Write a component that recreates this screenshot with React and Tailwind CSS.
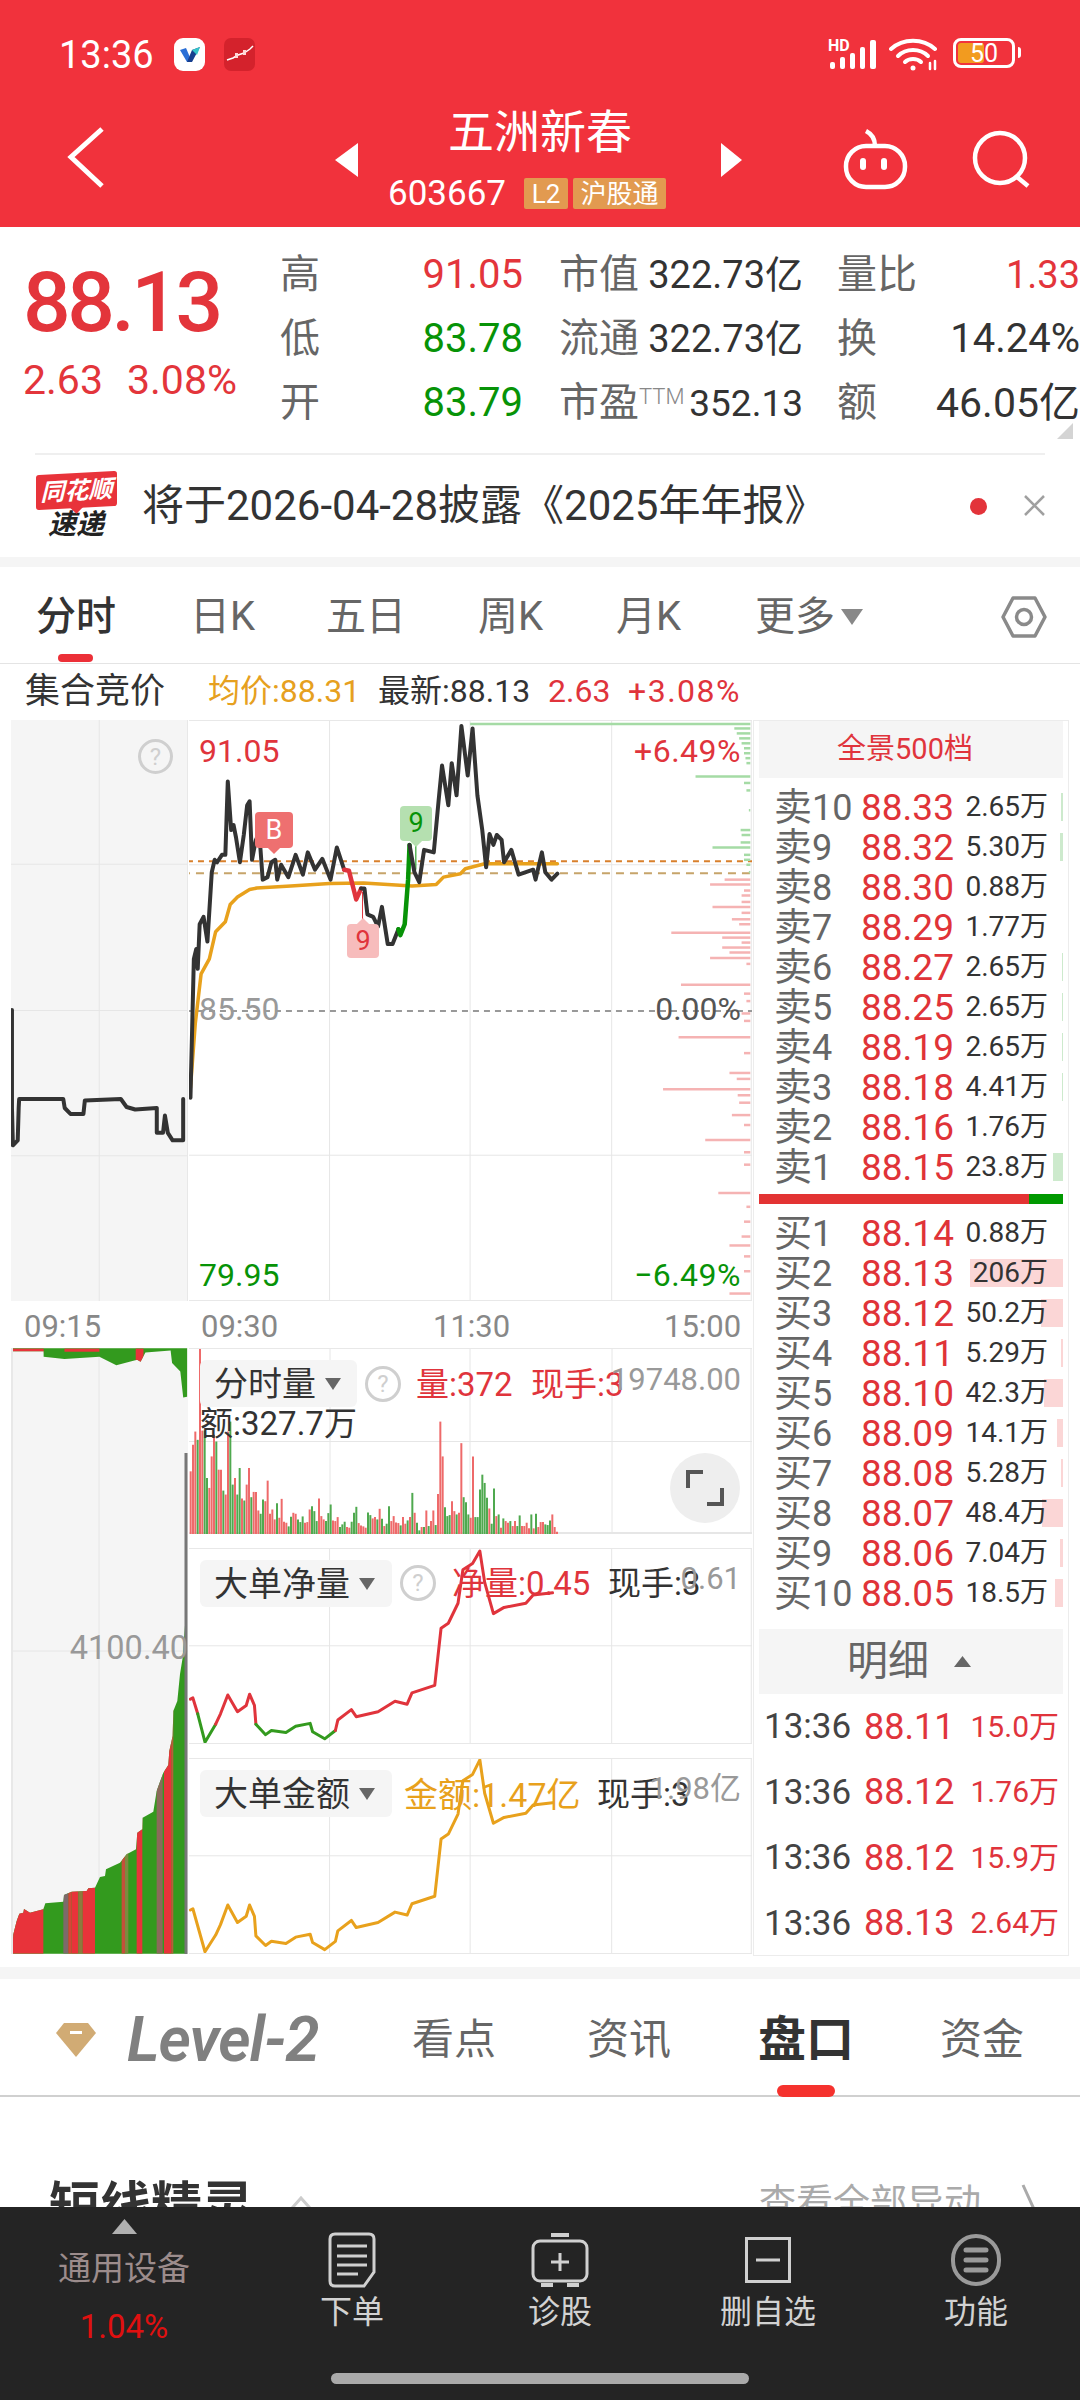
import React from "react";

const sells = [
  ["10", "88.33", "2.65万", 2], ["9", "88.32", "5.30万", 3], ["8", "88.30", "0.88万", 0], ["7", "88.29", "1.77万", 0], ["6", "88.27", "2.65万", 1],
  ["5", "88.25", "2.65万", 1], ["4", "88.19", "2.65万", 1], ["3", "88.18", "4.41万", 1], ["2", "88.16", "1.76万", 0], ["1", "88.15", "23.8万", 10],
];
const buys = [
  ["1", "88.14", "0.88万", 0], ["2", "88.13", "206万", 93], ["3", "88.12", "50.2万", 22], ["4", "88.11", "5.29万", 2], ["5", "88.10", "42.3万", 19],
  ["6", "88.09", "14.1万", 6], ["7", "88.08", "5.28万", 2], ["8", "88.07", "48.4万", 21], ["9", "88.06", "7.04万", 3], ["10", "88.05", "18.5万", 8],
];
const ticks = [["88.11", "15.0万"], ["88.12", "1.76万"], ["88.12", "15.9万"], ["88.13", "2.64万"]];

// chart points are in the coordinates of the zoomed reference
const preLine = "23,903 23,1100 25,1175 35,1165 37,1100 38,1082 130,1082 133,1100 145,1112 172,1112 175,1085 250,1082 262,1098 280,1103 325,1100 325,1150 338,1150 342,1115 348,1150 358,1165 380,1165 380,1082";
const priceA = "393,1080 400,800 405,780 408,820 412,730 420,715 428,765 437,625 443,600 448,605 458,590 465,590 470,442 477,540 482,530 487,555 495,605 503,550 510,490 515,482 520,600 528,560 535,545 542,640 552,635 560,605 568,600 572,640 580,610 595,635 610,590 625,630 635,585 650,620 665,598 682,640 695,575 710,620";
const priceRed = "710,620 720,622 735,680 745,658";
const priceB = "745,658 752,658 758,710 770,715 780,735 788,695 800,770 810,770 822,740";
const priceGreen = "822,740 826,752 835,730 842,640 845,570";
const priceC = "845,570 855,625 865,645 875,580 895,585 905,480 912,410 925,490 932,405 942,470 952,330 965,430 975,335 985,470 995,540 1003,615 1010,548 1018,570 1025,550 1035,560 1040,605 1055,580 1070,630 1100,620 1105,640 1118,585 1125,625 1138,640 1150,628";
const avgLine = "393,1060 403,930 415,830 432,800 445,745 465,725 475,690 490,675 515,660 530,657 600,653 680,648 750,647 800,650 850,653 900,650 915,635 950,628 960,618 1000,608 1150,608";

const depthGreen = [[326, 970], [335, 1515], [345, 1520], [355, 1525], [365, 1530], [375, 1535], [385, 1535], [395, 1538], [405, 1540], [432, 1435], [445, 1535], [460, 1540], [500, 1545], [540, 1528], [550, 1530], [565, 1528], [575, 1470], [590, 1535], [600, 1535], [610, 1540], [625, 1545]];
const depthRed = [[640, 1495], [650, 1465], [662, 1535], [672, 1530], [685, 1530], [695, 1470], [707, 1530], [720, 1510], [730, 1525], [747, 1385], [757, 1490], [767, 1530], [777, 1490], [787, 1505], [798, 1465], [810, 1540], [852, 1405], [870, 1535], [885, 1540], [910, 1530], [925, 1535], [958, 1400], [990, 1535], [1030, 1505], [1042, 1520], [1063, 1368], [1075, 1522], [1090, 1525], [1115, 1510], [1135, 1535], [1165, 1455], [1190, 1535], [1215, 1535], [1272, 1482], [1300, 1540], [1330, 1535], [1360, 1530], [1378, 1505], [1400, 1535], [1430, 1535], [1475, 1505]];

// one bar every 7 zoom units from x=32, r/g + top
const volTops = ("r150 r70 r30 g55 r-219 r27 g27 g170 r200 r105 r40 g60 r145 r145 g208 r220 r30 g0 g190 r170 g220 g140 r232 g238 r190 r140 g228 r212 r212 r268 g278 g235 r240 r178 r278 r265 r295 g246 r290 r233 r302 r305 g316 g287 r275 r278 g295 g303 g286 r305 r303 r265 g255 g270 g300 r232 r285 r295 g300 g276 g250 r298 r300 r288 g318 g310 g302 r318 r320 g302 g275 g257 r306 r313 r316 r320 g274 g282 r292 r288 g295 r263 g293 r315 g308 g255 r300 r285 r304 r306 g313 r288 r308 g298 r288 g215 r275 g305 g328 r318 g318 r268 g315 r300 r268 g312 r218 r0 r105 g258 g285 g282 r240 r270 g280 r275 r65 g228 g243 g280 r290 r105 g288 g288 g205 g160 g185 g230 r262 g308 g202 r285 g280 r320 g292 r300 r305 g300 r315 r300 g315 g283 r315 r315 r305 r322 g280 r322 g278 r318 r303 r303 g310 g312 g298 r280 r318 r332").split(" ");

const netRed1 = "393,900 398,897 408,935";
const netGreen1 = "408,935 423,1003 445,960";
const netRed2 = "445,960 455,935 470,890 490,930 508,915 515,888 525,915 528,960";
const netGreen2 = "528,960 548,985 560,975 590,980 610,965 640,958 645,978 670,995 692,975";
const netRed3 = "692,975 697,950 725,925 735,942 780,930 815,905 840,912 850,885 897,867 910,730 925,718 945,670 955,590 975,575 990,545 1000,620 1018,695 1040,680 1085,670 1100,650 1140,645";
const goldLine = "393,1400 398,1397 423,1500 445,1460 455,1435 470,1388 490,1430 508,1415 515,1388 525,1415 528,1462 548,1485 560,1475 590,1480 610,1465 640,1458 645,1478 670,1495 692,1475 697,1450 725,1425 735,1442 780,1430 815,1405 840,1412 850,1385 897,1367 910,1230 925,1218 945,1170 955,1090 975,1075 990,1040 1000,1120 1018,1192 1040,1178 1085,1168 1100,1148 1140,1143";
const leftTop = "25,65 386,65 386,180 378,182 372,120 355,100 352,70 300,75 290,97 283,92 240,105 205,85 133,90 90,85 90,72 25,72";
const leftArea = "36,938 40,880 50,840 58,818 70,815 72,804 90,815 130,805 136,787 190,782 192,762 215,752 260,750 265,742 285,740 300,708 315,705 318,685 360,665 380,640 408,625 412,575 427,565 428,530 460,512 470,450 490,395 505,372 508,330 518,285 520,210 532,180 540,100 548,50 556,-60 560,-76 560,938";
const leftStripes = [[36, 94, "#e8333a"], [190, 15, "#7d6a6a"], [205, 10, "#d84438"], [215, 20, "#e8333a"], [235, 13, "#8d7a3e"], [248, 37, "#e8333a"], [365, 10, "#c5503a"], [375, 10, "#7d8a40"], [410, 17, "#e8333a"], [470, 18, "#8a6a5a"], [492, 23, "#e8333a"], [515, 5, "#b5603a"], [556, 4, "#7d6a6a"]];

function Line({ points, color, width = 3, dash }) {
  return <polyline points={points} fill="none" stroke={color} strokeWidth={width} strokeDasharray={dash} strokeLinejoin="round" strokeLinecap="round" vectorEffect="non-scaling-stroke" />;
}

function HLine({ y, x1 = 0, x2 = 2000, color = "#e6e6e6", width = 1, dash }) {
  return <line x1={x1} x2={x2} y1={y} y2={y} stroke={color} strokeWidth={width} strokeDasharray={dash} vectorEffect="non-scaling-stroke" />;
}

function VLine({ x, y1 = 0, y2 = 2000, color = "#e6e6e6", width = 1 }) {
  return <line x1={x} x2={x} y1={y1} y2={y2} stroke={color} strokeWidth={width} vectorEffect="non-scaling-stroke" />;
}

function Help({ className }) {
  return (
    <div className={"absolute flex items-center justify-center rounded-full border-[3px] border-[#cfcfcf] text-[#cfcfcf] text-[24px] leading-none " + className}>?</div>
  );
}

function Dropdown({ label, className }) {
  return (
    <div className={"absolute left-[11px] top-[11px] h-[47px] flex items-center gap-[9px] pl-[14px] rounded-md bg-[#f5f5f5] text-[34px] leading-none text-[#333] " + className}>
      {label}
      <svg width="16" height="12" viewBox="0 0 16 12"><polygon points="0,0 16,0 8,12" fill="#666" /></svg>
    </div>
  );
}

function Tag({ children, className }) {
  return <div className={"h-[31px] flex items-center justify-center rounded-[2px] bg-[#e29a50] text-white text-[26px] leading-none " + className}>{children}</div>;
}

function StatRow({ label, value, valueClass = "text-[#333]" }) {
  return (
    <div className="h-[64px] flex items-center justify-between">
      <span className="text-[40px] leading-none text-[#666]">{label}</span>
      <span className={"leading-none " + valueClass}>{value}</span>
    </div>
  );
}

function Depth({ side, row, barColor }) {
  const [lvl, price, amount, bar] = row;
  return (
    <div className="relative h-[40px] flex items-center">
      {bar > 0 && <div className={"absolute right-0 top-[6px] h-[28px] " + barColor} style={{ width: bar }} />}
      <span className="relative w-[102px] pl-[15px] leading-none text-[#666] whitespace-nowrap">
        <span className="text-[38px]">{side}</span>
        <span className="text-[36px]">{lvl}</span>
      </span>
      <span className="relative text-[37px] leading-none text-[#e03338]">{price}</span>
      <span className="relative ml-auto mr-[15px] text-[28px] leading-none text-[#333]">{amount}</span>
    </div>
  );
}

function BottomItem({ label, children }) {
  return (
    <div className="w-[208px] flex flex-col items-center">
      <div className="h-[62px] flex items-center justify-center">{children}</div>
      <span className="mt-[5px] text-[32px] leading-none text-[#d2d2d2]">{label}</span>
    </div>
  );
}

export default function App() {
  return (
    <div className="relative w-[1080px] h-[2400px] overflow-hidden flex flex-col bg-white font-['Roboto','Noto_Sans_CJK_SC',sans-serif]">
      {/* header */}
      <div className="h-[227px] shrink-0 bg-[#f1323c] text-white">
        <div className="h-[105px] flex items-start pt-[38px] pl-[59px]">
          <span className="w-[115px] text-[38px] leading-[34px]">13:36</span>
          <div className="w-[31px] h-[33px] rounded-[9px] bg-white flex items-center justify-center">
            <svg width="24" height="22" viewBox="0 0 24 22">
              <path d="M2 6 L9 18 L14 18 L8 4 Z" fill="#2a6fd6" />
              <path d="M9 18 L14 18 L22 3 L14 6 Z" fill="#173f8f" />
              <path d="M14 6 L22 3 L19 11 Z" fill="#35c4c9" />
            </svg>
          </div>
          <div className="ml-[19px] w-[31px] h-[33px] rounded-[7px] bg-[#d4222c] flex items-center justify-center">
            <svg width="28" height="20" viewBox="0 0 28 20">
              <polyline points="1,15 7,13 12,10 18,8 24,4 27,1" fill="none" stroke="#fff" strokeWidth="1.5" />
              <rect x="9" y="8" width="3" height="5" fill="#ffd7d7" />
              <rect x="17" y="5" width="3" height="5" fill="#ffd7d7" />
            </svg>
          </div>
          <div className="ml-auto mr-[59px] flex items-start">
            <div className="relative w-[50px] h-[32px]">
              <span className="absolute left-0 top-0 text-[16px] leading-none font-bold">HD</span>
              <svg className="absolute left-0 top-0" width="50" height="32" viewBox="0 0 50 32">
                <rect x="2" y="24" width="5" height="7" rx="2" fill="#fff" />
                <rect x="12" y="19" width="5" height="12" rx="2" fill="#fff" />
                <rect x="22" y="15" width="5" height="16" rx="2" fill="#fff" />
                <rect x="32" y="9" width="5" height="22" rx="2" fill="#fff" />
                <rect x="42" y="2" width="6" height="29" rx="2" fill="#fff" />
              </svg>
            </div>
            <svg className="ml-[11px]" width="48" height="34" viewBox="0 0 48 34" fill="none" stroke="#fff" strokeWidth="4" strokeLinecap="round">
              <path d="M2 11 C14 0 34 0 46 11" />
              <path d="M9 18 C17 10 31 10 39 18" />
              <path d="M16 24 C20 20 28 20 32 24" />
              <circle cx="24" cy="30" r="2.5" fill="#fff" stroke="none" />
              <path d="M41 25 V31 M46 23 V31" strokeWidth="2.5" />
            </svg>
            <div className="ml-[16px] relative w-[62px] h-[30px] rounded-[8px] border-[3px] border-white flex items-center">
              <div className="absolute left-[2px] top-[2px] bottom-[2px] w-[26px] rounded-[3px] bg-[#f29b1f]" />
              <span className="relative ml-[14px] text-[25px] leading-none">50</span>
            </div>
            <div className="mt-[9px] ml-[3px] w-[3px] h-[11px] rounded-r-sm bg-white" />
          </div>
        </div>
        <div className="relative h-[122px]">
          <svg className="absolute left-0 top-0" width="1080" height="122" viewBox="0 105 1080 122">
            <polyline points="102,129 71,157 102,186" fill="none" stroke="#fff" strokeWidth="5" />
            <polygon points="358,143 358,177 335,160" fill="#fff" />
            <polygon points="721,143 721,177 742,160" fill="#fff" />
            <g fill="none" stroke="#fff" strokeWidth="4.5">
              <rect x="846" y="146" width="59" height="41" rx="20" />
              <path d="M875 146 C875 138 872 134 866 131" />
              <circle cx="1000" cy="158" r="25" />
              <path d="M1017 177 L1028 186" />
            </g>
            <rect x="860" y="158" width="6" height="12" rx="3" fill="#fff" />
            <rect x="881" y="158" width="6" height="12" rx="3" fill="#fff" />
          </svg>
          <div className="absolute left-[448px] top-[5px] text-[46px] leading-[45px] whitespace-nowrap">五洲新春</div>
          <div className="absolute left-[388px] top-[71px] flex items-center">
            <span className="w-[136px] text-[35px] leading-none">603667</span>
            <Tag className="w-[44px]">L2</Tag>
            <Tag className="ml-[5px] w-[93px]">沪股通</Tag>
          </div>
        </div>
      </div>

      {/* quote */}
      <div className="relative h-[226px] shrink-0 flex pt-[16px]">
        <div className="w-[280px] pl-[23px] pt-[20px]">
          <div className="text-[84px] leading-[80px] text-[#e3353b] font-medium tracking-[-3.5px]">88.13</div>
          <div className="mt-[17px] flex text-[41px] leading-none text-[#e3353b]">
            <span className="w-[104px]">2.63</span>
            <span>3.08%</span>
          </div>
        </div>
        <div className="w-[243px]">
          <StatRow label="高" value="91.05" valueClass="text-[40px] text-[#e3353b]" />
          <StatRow label="低" value="83.78" valueClass="text-[40px] text-[#079307]" />
          <StatRow label="开" value="83.79" valueClass="text-[40px] text-[#079307]" />
        </div>
        <div className="ml-[36px] w-[244px]">
          <StatRow label="市值" value="322.73亿" valueClass="text-[38px] text-[#333]" />
          <StatRow label="流通" value="322.73亿" valueClass="text-[38px] text-[#333]" />
          <div className="h-[64px] flex items-center">
            <span className="text-[40px] leading-none text-[#666]">市盈</span>
            <span className="self-start mt-[15px] text-[22px] leading-none font-light text-[#888]">TTM</span>
            <span className="ml-auto text-[37px] leading-none text-[#333]">352.13</span>
          </div>
        </div>
        <div className="ml-[34px] w-[243px]">
          <StatRow label="量比" value="1.33" valueClass="text-[38px] text-[#e3353b]" />
          <StatRow label="换" value="14.24%" valueClass="text-[40px] text-[#333]" />
          <StatRow label="额" value="46.05亿" valueClass="text-[41px] text-[#333]" />
        </div>
        <svg className="absolute left-[1057px] top-[196px]" width="16" height="16" viewBox="0 0 16 16"><polygon points="16,0 16,16 0,16" fill="#d4d4d4" /></svg>
      </div>

      {/* notice */}
      <div className="h-[104px] shrink-0 mx-[35px] border-t-2 border-[#efefef] flex items-center">
        <div className="w-[82px] h-[66px] flex flex-col items-center">
          <div className="relative w-[81px] h-[36px] rounded-[3px] bg-[#e8333a] skew-y-[-3deg] flex items-center justify-center text-white italic font-bold text-[24px] leading-none">
            同花顺
            <div className="absolute left-[36px] bottom-[-4px] w-[9px] h-[9px] rotate-45 bg-[#e8333a]" />
          </div>
          <div className="mt-[3px] text-[#222] italic font-bold text-[28px] leading-none">速递</div>
        </div>
        <span className="ml-[25px] text-[42px] leading-none text-[#333] whitespace-nowrap">将于2026-04-28披露《2025年年报》</span>
        <div className="ml-auto mr-[58px] w-[17px] h-[17px] rounded-full bg-[#e3333a]" />
        <svg className="absolute left-[1024px] top-[495px]" width="21" height="21" viewBox="0 0 21 21" stroke="#a0a0a0" strokeWidth="2.5"><path d="M1 1 L20 20 M20 1 L1 20" /></svg>
      </div>
      <div className="h-[10px] shrink-0 bg-[#f5f5f5]" />

      {/* period tabs */}
      <div className="relative h-[97px] shrink-0 border-b border-[#e4e4e4] flex items-center pt-[3px] text-[40px] leading-none text-[#666]">
        <span className="ml-[36px] w-[154px] font-medium text-[#333]">分时</span>
        <span className="w-[136px]">日K</span>
        <span className="w-[152px]">五日</span>
        <span className="w-[138px]">周K</span>
        <span className="w-[139px]">月K</span>
        <span>更多</span>
        <svg className="ml-[6px]" width="22" height="16" viewBox="0 0 22 16"><polygon points="0,0 22,0 11,16" fill="#888" /></svg>
        <svg className="absolute left-[1001px] top-[29px]" width="46" height="42" viewBox="0 0 46 42" fill="none" stroke="#8a8a8a" strokeWidth="3.5">
          <polygon points="12,2 34,2 44,21 34,40 12,40 2,21" strokeLinejoin="round" />
          <circle cx="23" cy="21" r="7.5" />
        </svg>
        <div className="absolute left-[58px] bottom-[1px] w-[35px] h-[8px] rounded-full bg-[#ec3038]" />
      </div>

      {/* sub header */}
      <div className="h-[54px] shrink-0 flex items-center text-[32px] leading-none whitespace-nowrap">
        <span className="ml-[25px] w-[183px] text-[35px] text-[#333]">集合竞价</span>
        <span className="w-[170px] text-[#e6a020]">均价:88.31</span>
        <span className="w-[170px] text-[#333]">最新:88.13</span>
        <span className="w-[80px] text-[#e0343c]">2.63</span>
        <span className="text-[#e0343c] tracking-[1.5px]">+3.08%</span>
      </div>

      {/* chart + order book */}
      <div className="h-[1238px] shrink-0 flex pt-[2px]">
        <div className="w-[753px] shrink-0 pl-[11px]">
          <div className="h-[581px] flex">
            <div className="relative w-[177px] bg-[#f5f5f5] border-r border-[#e8e8e8]">
              <svg className="absolute inset-0 w-full h-full" viewBox="21 320 367 1168" preserveAspectRatio="none">
                <HLine y={610} />
                <HLine y={904} />
                <HLine y={1196} />
                <VLine x={205} />
                <Line points={preLine} color="#333" width={4} />
              </svg>
              <Help className="left-[127px] top-[19px] w-[35px] h-[35px]" />
            </div>
            <div className="relative ml-[1px] w-[563px] border-y border-[#e8e8e8]">
              <svg className="absolute inset-0 w-full h-full" viewBox="390 320 1161.5 1168" preserveAspectRatio="none">
                <HLine y={610} />
                <HLine y={1196} />
                <VLine x={680} />
                <VLine x={970} />
                <VLine x={1262} />
                <VLine x={1550} />
                <HLine y={603} color="#d9802c" width={2} dash="6 5" />
                <HLine y={627} color="#c6a46a" width={2} dash="8 6" />
                <HLine y={905} color="#999" width={2} dash="6 5" />
                {depthGreen.map(([y, x]) => <HLine key={y} y={y} x1={x} x2={1548} color="#a5dba5" width={2.5} />)}
                {depthRed.map(([y, x]) => <HLine key={y} y={y} x1={x} x2={1548} color="#f5b3b3" width={2.5} />)}
                <Line points={avgLine} color="#e8a11c" width={3.5} />
                <VLine x={748} y1={665} y2={725} color="#e0343c" />
                <VLine x={858} y1={565} y2={620} color="#079307" />
                <Line points={priceA} color="#333" width={4} />
                <Line points={priceRed} color="#e0343c" width={4.5} />
                <Line points={priceB} color="#333" width={4} />
                <Line points={priceGreen} color="#079307" width={4.5} />
                <Line points={priceC} color="#333" width={4} />
              </svg>
              <span className="absolute left-[10px] top-[14px] text-[32px] leading-none text-[#e0343c]">91.05</span>
              <span className="absolute left-[10px] top-[272px] text-[32px] leading-none text-[#999]">85.50</span>
              <span className="absolute left-[10px] top-[538px] text-[32px] leading-none text-[#079307]">79.95</span>
              <span className="absolute right-[11px] top-[14px] text-[32px] leading-none text-[#e0343c] tracking-[0.5px]">+6.49%</span>
              <span className="absolute right-[11px] top-[272px] text-[32px] leading-none text-[#555]">0.00%</span>
              <span className="absolute right-[11px] top-[538px] text-[32px] leading-none text-[#079307] tracking-[0.5px]">−6.49%</span>
              <div className="absolute left-[66px] top-[91px] w-[38px] h-[36px] rounded-[4px] bg-[#ee7070] flex items-center justify-center text-white text-[27px] leading-none">
                <div className="absolute left-[14px] bottom-[-4px] w-[10px] h-[10px] rotate-45 bg-[#ee7070]" />
                <span className="relative">B</span>
              </div>
              <div className="absolute left-[158px] top-[203px] w-[32px] h-[34px] rounded-[4px] bg-[#f7bcbc] flex items-center justify-center text-[#e0343c] text-[27px] leading-none">
                <div className="absolute left-[11px] top-[-4px] w-[10px] h-[10px] rotate-45 bg-[#f7bcbc]" />
                <span className="relative">9</span>
              </div>
              <div className="absolute left-[211px] top-[85px] w-[32px] h-[35px] rounded-[4px] bg-[#b5e0b0] flex items-center justify-center text-[#079307] text-[27px] leading-none">
                <div className="absolute left-[11px] bottom-[-4px] w-[10px] h-[10px] rotate-45 bg-[#b5e0b0]" />
                <span className="relative">9</span>
              </div>
            </div>
          </div>

          <div className="h-[47px] relative text-[31px] leading-none text-[#888]">
            <span className="absolute left-[13px] top-[10px]">09:15</span>
            <span className="absolute left-[190px] top-[10px]">09:30</span>
            <span className="absolute left-[422px] top-[10px]">11:30</span>
            <span className="absolute left-[653px] top-[10px]">15:00</span>
          </div>

          <div className="h-[606px] flex">
            <div className="relative w-[177px] h-full bg-[#f5f5f5] border-l-2 border-[#e8e8e8]">
              <svg className="absolute inset-0 w-full h-full" viewBox="13 1347 175 606" preserveAspectRatio="none">
                <defs>
                  <clipPath id="leftClip"><polygon points={leftArea} /></clipPath>
                  <clipPath id="leftTopClip"><polygon points={leftTop} /></clipPath>
                </defs>
                <HLine y={1650} />
                <VLine x={99} />
                {/* upper block in the first crop's scale */}
                <g transform="translate(0 1320) scale(0.4847 0.4209)">
                  <polygon points={leftTop} fill="#339a1e" />
                  <g clipPath="url(#leftTopClip)" fill="#e8333a">
                    <rect x="25" y="65" width="65" height="10" />
                    <rect x="133" y="65" width="72" height="8" />
                    <rect x="280" y="65" width="16" height="40" />
                  </g>
                </g>
                <g transform="translate(0 1640) scale(0.3333)">
                  <polygon points={leftArea} fill="#339a1e" />
                  <g clipPath="url(#leftClip)">
                    {leftStripes.map(([x, w, c]) => <rect key={x} x={x} y="-100" width={w} height="1040" fill={c} />)}
                  </g>
                </g>
                <VLine x={186} y1={1452} y2={1953} color="#777" width={3} />
              </svg>
              <span className="absolute right-0 top-[284px] text-[32.5px] leading-none text-[#999]">4100.40</span>
            </div>
            <div className="ml-[1px] w-[563px] h-full flex flex-col">
              <div className="relative h-[186px] border-t border-[#e8e8e8]">
                <svg className="absolute inset-0 w-full h-full" viewBox="189 1347 563 186" preserveAspectRatio="none">
                  <HLine y={1440} />
                  <HLine y={1532} width={2} />
                  <VLine x={330} />
                  <VLine x={470} />
                  <VLine x={612} />
                  <VLine x={751} />
                  {volTops.map((t, i) => (
                    <VLine key={i} x={180 + (32 + i * 7) / 3} y1={1420 + Number(t.slice(1)) / 3} y2={1534} color={t[0] === "g" ? "#4fa94f" : "#ee6a6a"} width={2} />
                  ))}
                </svg>
                <Dropdown label="分时量" className="w-[157px]" />
                <Help className="left-[176px] top-[17px] w-[36px] h-[36px]" />
                <span className="absolute left-[227px] top-[19px] text-[33px] leading-none text-[#e0343c]">量:372</span>
                <span className="absolute left-[342px] top-[19px] text-[33px] leading-none text-[#e0343c]">现手:3</span>
                <span className="absolute right-[11px] top-[15px] text-[31px] leading-none text-[#999]">19748.00</span>
                <span className="absolute left-[11px] top-[58px] text-[33px] leading-none text-[#333]">额:327.7万</span>
                <div className="absolute left-[481px] top-[104px] w-[70px] h-[70px] rounded-full bg-[#eeeeee] flex items-center justify-center">
                  <svg width="38" height="38" viewBox="0 0 38 38" fill="none" stroke="#555" strokeWidth="4">
                    <path d="M2 19 V3 H17" />
                    <path d="M36 19 V35 H21" />
                  </svg>
                </div>
              </div>
              <div className="relative h-[196px] mt-[14px] border-y border-[#e8e8e8]">
                <svg className="absolute inset-0 w-full h-full" viewBox="390 540 1161.5 465" preserveAspectRatio="none">
                  <HLine y={772} />
                  <VLine x={680} />
                  <VLine x={970} />
                  <VLine x={1262} />
                  <VLine x={1550} />
                  <Line points={netRed1} color="#e0343c" />
                  <Line points={netGreen1} color="#339a1e" />
                  <Line points={netRed2} color="#e0343c" />
                  <Line points={netGreen2} color="#339a1e" />
                  <Line points={netRed3} color="#e0343c" />
                </svg>
                <Dropdown label="大单净量" className="w-[192px]" />
                <Help className="left-[211px] top-[16px] w-[36px] h-[36px]" />
                <span className="absolute left-[263px] top-[18px] text-[33px] leading-none text-[#e0343c]">净量:0.45</span>
                <span className="absolute left-[419px] top-[18px] text-[33px] leading-none text-[#333]">现手:3</span>
                <span className="absolute right-[11px] top-[14px] text-[31px] leading-none text-[#999]">0.61</span>
              </div>
              <div className="relative h-[196px] mt-[14px] border-y border-[#e8e8e8]">
                <svg className="absolute inset-0 w-full h-full" viewBox="390 1038 1161.5 465" preserveAspectRatio="none">
                  <HLine y={1270} />
                  <VLine x={680} />
                  <VLine x={970} />
                  <VLine x={1262} />
                  <VLine x={1550} />
                  <Line points={goldLine} color="#e8a11c" />
                </svg>
                <Dropdown label="大单金额" className="w-[192px]" />
                <span className="absolute left-[215px] top-[19px] text-[34px] leading-none text-[#e8a11c]">金额:1.47亿</span>
                <span className="absolute left-[408px] top-[19px] text-[33px] leading-none text-[#333]">现手:3</span>
                <span className="absolute right-[11px] top-[14px] text-[31px] leading-none text-[#999]">1.98亿</span>
              </div>
            </div>
          </div>
        </div>

        {/* order book */}
        <div className="w-[316px] h-[1236px] border border-[#ececec] px-[5px] flex flex-col">
          <div className="h-[57px] shrink-0 bg-[#f5f5f5] flex items-center justify-center pr-[12px] text-[29px] leading-none text-[#e0343c]">全景500档</div>
          <div className="mt-[9px]">
            {sells.map((r) => <Depth key={r[0]} side="卖" row={r} barColor="bg-[#cdeacd]" />)}
          </div>
          <div className="mt-[7px] h-[10px] shrink-0 flex">
            <div className="w-[270px] bg-[#e33333]" />
            <div className="flex-1 bg-[#009900]" />
          </div>
          <div className="mt-[9px]">
            {buys.map((r) => <Depth key={r[0]} side="买" row={r} barColor="bg-[#fbd6d6]" />)}
          </div>
          <div className="mt-[16px] h-[65px] shrink-0 bg-[#f5f5f5] flex items-center pl-[88px] text-[41px] leading-none text-[#666]">
            明细
            <svg className="ml-[25px]" width="17" height="11" viewBox="0 0 17 11"><polygon points="0,11 17,11 8.5,0" fill="#666" /></svg>
          </div>
          {ticks.map(([p, a], i) => (
            <div key={i} className="h-[65.5px] shrink-0 flex items-center leading-none">
              <span className="ml-[5px] w-[100px] text-[35px] text-[#444]">13:36</span>
              <span className="text-[36px] text-[#e0343c]">{p}</span>
              <span className="ml-auto mr-[4px] text-[30px] text-[#e0343c]">{a}</span>
            </div>
          ))}
        </div>
      </div>

      <div className="mt-[11px] h-[12px] shrink-0 bg-[#f5f5f5]" />

      {/* lower tabs */}
      <div className="relative h-[118px] shrink-0 border-b-2 border-[#d0d0d0] flex items-center pt-[6px] text-[42px] leading-none text-[#666]">
        <svg className="ml-[56px]" width="40" height="34" viewBox="0 0 40 34">
          <polygon points="8,0 32,0 40,10 20,34 0,10" fill="#d1ab74" />
          <rect x="14" y="8" width="12" height="3" fill="#fff" />
        </svg>
        <span className="ml-[31px] w-[285px] italic font-semibold text-[62px] text-[#808080] tracking-[-1px]">Level-2</span>
        <span className="w-[175px]">看点</span>
        <span className="w-[171px]">资讯</span>
        <span className="w-[182px] text-[48px] font-bold text-[#333]">盘口</span>
        <span>资金</span>
        <div className="absolute left-[777px] bottom-[-2px] w-[58px] h-[12px] rounded-full bg-[#f5322e]" />
      </div>

      {/* spirit section, cut by the bottom bar */}
      <div className="flex-1 min-h-0 overflow-hidden flex items-start pt-[84px] pl-[49px] leading-none">
        <span className="text-[51px] font-bold text-[#333]">短线精灵</span>
        <svg className="ml-[30px] mt-[13px]" width="36" height="24" viewBox="0 0 36 24" fill="none" stroke="#ccc" strokeWidth="3"><polyline points="2,22 18,4 34,22" /></svg>
        <span className="ml-[440px] mt-[4px] text-[37px] text-[#aaa]">查看全部异动</span>
        <svg className="ml-[40px] mt-[2px]" width="14" height="50" viewBox="0 0 14 50" fill="none" stroke="#aaa" strokeWidth="3"><polyline points="2,2 12,24 2,46" /></svg>
      </div>

      {/* bottom bar */}
      <div className="relative h-[193px] shrink-0 bg-[#242424] flex items-start pt-[22px]">
        <div className="w-[248px] mt-[-10px] flex flex-col items-center">
          <svg width="25" height="15" viewBox="0 0 25 15"><polygon points="12.5,0 25,15 0,15" fill="#b0b0b0" /></svg>
          <span className="mt-[18px] text-[33px] leading-none text-[#9c8c8c]">通用设备</span>
          <span className="mt-[25px] text-[33px] leading-none text-[#e01010]">1.04%</span>
        </div>
        <BottomItem label="下单">
          <svg width="48" height="56" viewBox="0 0 48 56" fill="none" stroke="#d0d0d0" strokeWidth="3">
            <path d="M7 2 H41 Q46 2 46 7 V40 L36 54 H7 Q2 54 2 49 V7 Q2 2 7 2 Z" />
            <path d="M9 14 H39 M9 24 H39 M9 33 H39 M9 42 H30" />
          </svg>
        </BottomItem>
        <BottomItem label="诊股">
          <svg width="58" height="54" viewBox="0 0 58 54" fill="none" stroke="#d0d0d0" strokeWidth="3">
            <path d="M20 2 H38" strokeWidth="4" />
            <rect x="2" y="8" width="54" height="40" rx="7" />
            <path d="M10 52 H22 M36 52 H48" strokeWidth="4" />
            <path d="M29 20 V38 M20 29 H38" />
          </svg>
        </BottomItem>
        <BottomItem label="删自选">
          <svg width="46" height="46" viewBox="0 0 46 46" fill="none" stroke="#d0d0d0" strokeWidth="3">
            <rect x="1.5" y="1.5" width="43" height="43" />
            <path d="M11 23 H35" />
          </svg>
        </BottomItem>
        <BottomItem label="功能">
          <svg width="50" height="52" viewBox="0 0 50 52" fill="none" stroke="#9a9a9a" strokeWidth="4">
            <rect x="2" y="2" width="46" height="48" rx="23" />
            <path d="M15 16 H35 M15 26 H35 M15 36 H35" strokeWidth="5" strokeLinecap="round" />
          </svg>
        </BottomItem>
        <div className="absolute left-[331px] top-[166px] w-[418px] h-[11px] rounded-full bg-[#aaaaaa]" />
      </div>
    </div>
  );
}
